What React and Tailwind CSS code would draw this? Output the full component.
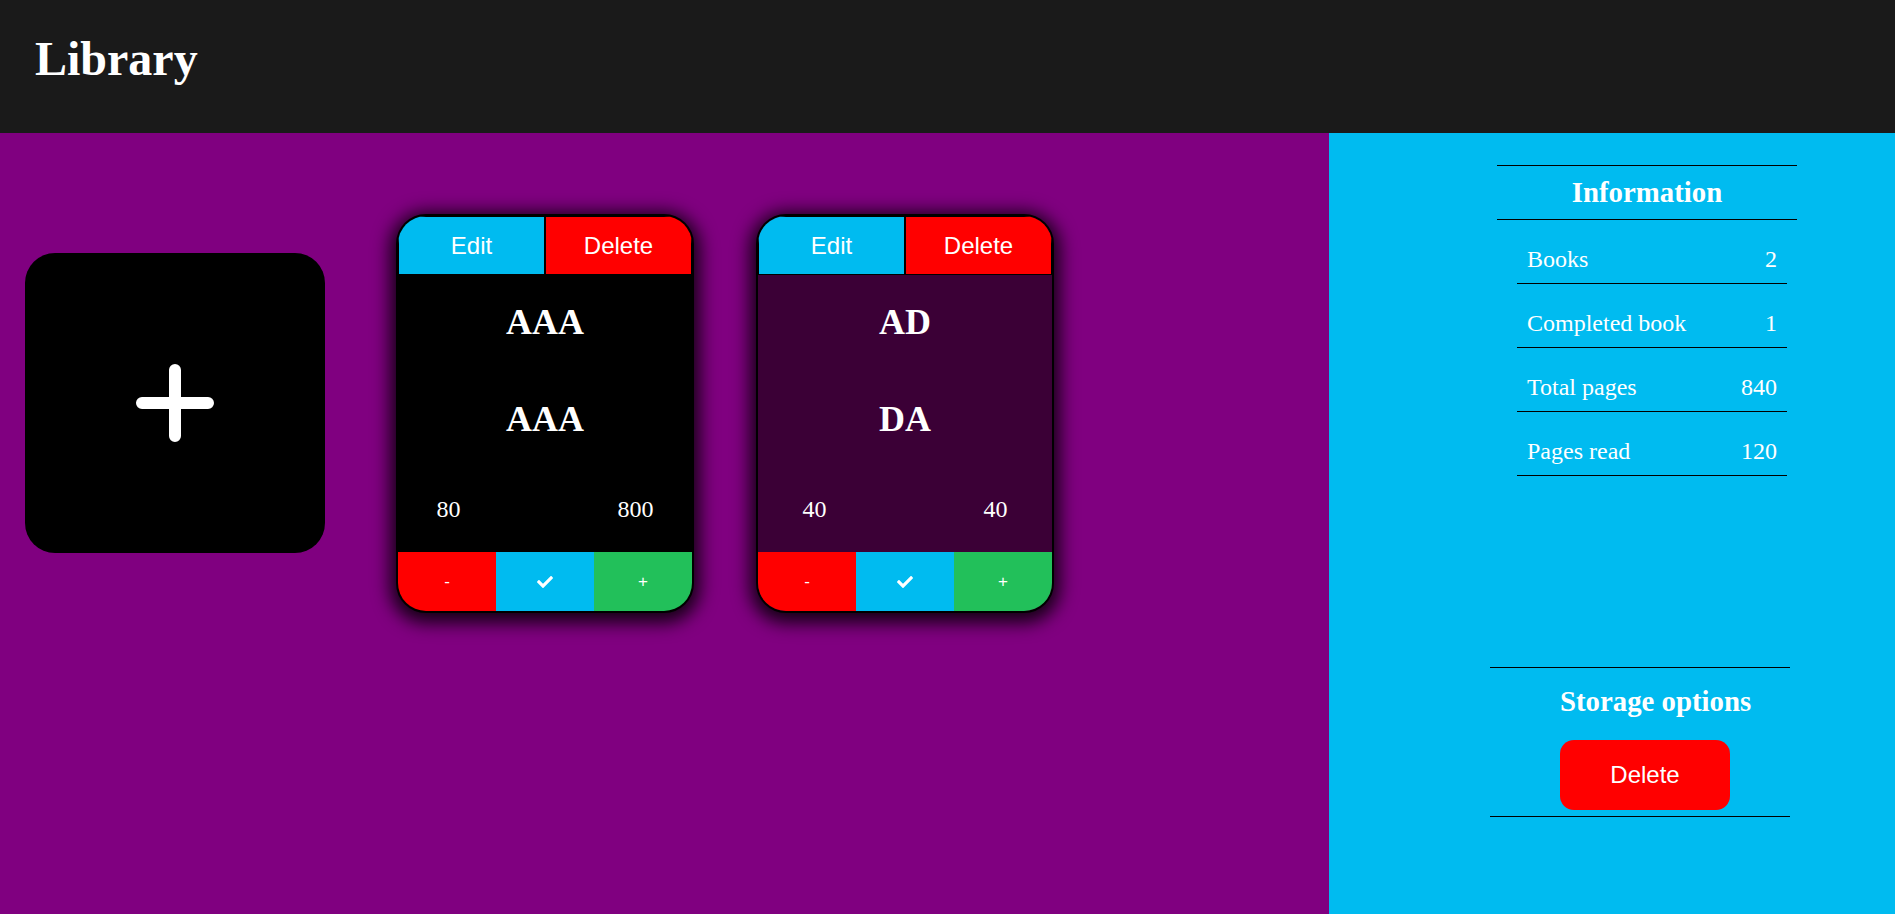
import { FaCheck } from "react-icons/fa";

const books = [
  { title: "AAA", author: "AAA", read: 80, pages: 800, done: false },
  { title: "AD", author: "DA", read: 40, pages: 40, done: true },
];

const stats = [
  { label: "Books", value: 2 },
  { label: "Completed book", value: 1 },
  { label: "Total pages", value: 840 },
  { label: "Pages read", value: 120 },
];

const BookCard = ({ book, className }) => {
  return (
    <div
      className={`w-[298px] h-[399px] flex flex-col border-2 border-black rounded-[30px] overflow-hidden shadow-[0_4px_18px_6px_rgba(0,0,0,0.85)] ${
        book.done ? "bg-[#3b0036]" : "bg-black"
      } ${className}`}
    >
      {/* Edit / Delete */}
      <div className="flex h-[59px] font-['Liberation_Sans',Arial,sans-serif] text-[24px] text-white">
        <button className="flex-1 bg-[#00bbf0] border border-black">Edit</button>
        <button className="flex-1 bg-[#ff0000] border border-black">Delete</button>
      </div>

      {/* Book info */}
      <div className="flex-1 flex flex-col items-center pt-[27px] text-white font-['Liberation_Serif','Times_New_Roman',serif]">
        <h2 className="text-[36px] font-bold leading-[41px]">{book.title}</h2>
        <h3 className="text-[36px] font-bold leading-[41px] mt-[56px]">{book.author}</h3>
        <div className="flex justify-center gap-[157px] text-[24px] leading-[28px] mt-[55px]">
          <span>{book.read}</span>
          <span>{book.pages}</span>
        </div>
      </div>

      {/* Progress buttons */}
      <div className="grid grid-cols-3 h-[59px] text-white font-['Liberation_Sans',Arial,sans-serif] text-[17px]">
        <button className="bg-[#ff0000]">-</button>
        <button className="bg-[#00bbf0] flex items-center justify-center">
          <FaCheck size={16} />
        </button>
        <button className="bg-[#22c05a]">+</button>
      </div>
    </div>
  );
};

export default function App() {
  return (
    <div className="min-h-screen flex flex-col font-['Liberation_Serif','Times_New_Roman',serif]">
      {/* Header */}
      <header className="h-[133px] bg-[#1a1a1a] px-[35px] pt-[32px]">
        <h1 className="text-[48px] font-bold text-white leading-[53px]">Library</h1>
      </header>

      <div className="flex-1 flex">
        {/* Shelf */}
        <main className="w-[1329px] bg-[#800080] flex items-start">
          <button className="ml-[25px] mt-[120px] w-[300px] h-[300px] bg-black rounded-[30px] flex items-center justify-center">
            <svg width="80" height="80" viewBox="0 0 80 80">
              <path d="M40 7v66M7 40h66" stroke="white" strokeWidth="12" strokeLinecap="round" />
            </svg>
          </button>
          <BookCard book={books[0]} className="ml-[71px] mt-[81px]" />
          <BookCard book={books[1]} className="ml-[62px] mt-[81px]" />
        </main>

        {/* Sidebar */}
        <aside className="flex-1 bg-[#00bbf0] text-white pt-[32px]">
          <section className="ml-[168px] w-[300px]">
            <h2 className="border-y border-black text-center text-[28.8px] font-bold leading-[33px] py-[10px]">
              Information
            </h2>
            <div className="ml-[20px] w-[270px]">
              {stats.map((s) => (
                <div
                  key={s.label}
                  className="h-[64px] flex items-end justify-between px-[10px] pb-[10px] border-b border-black text-[24px] leading-[28px]"
                >
                  <span>{s.label}</span>
                  <span>{s.value}</span>
                </div>
              ))}
            </div>
          </section>

          <section className="ml-[161px] mt-[191px] w-[300px] border-y border-black pl-[70px] pt-[17px] pb-[6px] flex flex-col items-start">
            <h2 className="text-[28.8px] font-bold leading-[33px]">Storage options</h2>
            <button className="mt-[22px] w-[170px] h-[70px] bg-[#ff0000] rounded-[14px] font-['Liberation_Sans',Arial,sans-serif] text-[24px]">
              Delete
            </button>
          </section>
        </aside>
      </div>
    </div>
  );
}
